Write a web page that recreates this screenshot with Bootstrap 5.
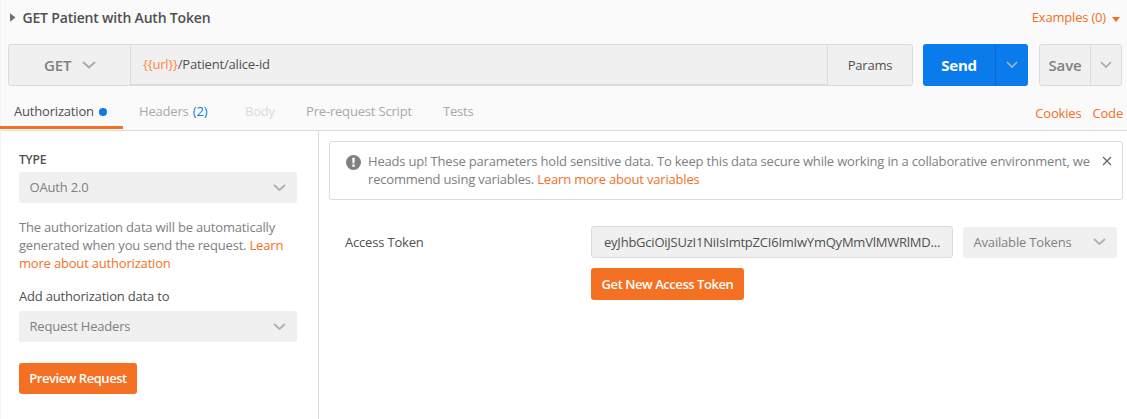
<!DOCTYPE html>
<html lang="en">
<head>
<meta charset="utf-8">
<meta name="viewport" content="width=device-width, initial-scale=1">
<title>GET Patient with Auth Token</title>
<link rel="stylesheet" href="https://cdn.jsdelivr.net/npm/bootstrap@5.3.0/dist/css/bootstrap.min.css">
<style>
  body { font: 13px/18px "Open Sans", sans-serif; letter-spacing: -.185px; color: #505050; background: #fff; height: 419px; overflow: hidden; }
  .app { height: 419px; border-left: 1px solid #f3f3f3; }
  .top { height: 131px; background: #fafafa; border-bottom: 1px solid #dbdbdb; }
  .title-row { height: 44px; padding: 0 7px 9px 8px; }
  .title { font-size: 14px; font-weight: 600; margin-left: 6.5px; }
  .orange { color: #f47023; text-decoration: none; }
  .examples { padding-bottom: 2px; }
  .request-row { height: 42px; padding: 0 4px 0 7px; }
  .box { background: #f0f0f0; border: 1px solid #dbdbdb; border-radius: 3px; }
  .url-box { width: 905px; margin-right: 10px; }
  .method { width: 122px; border-right: 1px solid #dbdbdb; font-size: 15px; font-weight: 600; color: #808080; padding-left: 35px; }
  .method svg { margin-left: 11px; }
  .url { width: 697px; border-right: 1px solid #dbdbdb; padding: 0 0 2px 12px; box-shadow: inset 0 -1px #dbdbdb; }
  .url .var { color: #ff8642; }
  .send { width: 105px; margin-right: 11px; background: #097bed; border-radius: 3px; color: #fff; font-size: 15px; font-weight: 700; letter-spacing: -.3px; }
  .send .main { width: 72px; }
  .send .drop { width: 33px; border-left: 1px solid #0a69c9; }
  .save { width: 83px; color: #808080; font-size: 15px; font-weight: 600; }
  .save .main { width: 50px; }
  .save .drop { width: 31px; border-left: 1px solid #dbdbdb; }
  .drop svg { margin: 0 1px 1px 0; }
  .tabs { height: 44px; padding-right: 4px; color: #a9a9a9; }
  .tabs .tab { height: 43px; }
  .tab-auth { width: 123px; padding-left: 14px; margin-left: -1px; border-bottom: 3px solid #f47023; color: #505050; padding-top: 10px; }
  .tab-plain { padding-top: 7px; }
  .tab-headers { width: 106px; margin-left: 16px; }
  .tab-body { width: 61px; color: #dcdcdc; }
  .tab-script { width: 137px; }
  .tab-links { padding-top: 11px; gap: 11px; }
  .dot { width: 8px; height: 8px; border-radius: 50%; background: #097bed; margin: 1px 0 0 5px; }
  .blue { color: #097bed; margin-left: 1px; }
  .side { width: 318px; padding: 20px 21px 0 18px; border-right: 1px solid #dbdbdb; }
  .label-type { font-size: 12px; font-weight: 600; height: 21px; }
  .pick { height: 31px; background: #f0f0f0; border-radius: 3px; color: #808080; padding: 0 11px; }
  .pick span { margin: 0 0 2px -.5px; }
  .pick-tokens { width: 154px; margin-left: 10px; }
  .pick-tokens span { margin-bottom: 0; }
  .muted { color: #808080; margin-top: 15px; }
  .label-add { margin: 15px 0 6px; }
  .act { background: #f47023; color: #fff; border-radius: 3px; font-size: 13px; font-weight: 600; line-height: 18px; padding: 0; border: 0; letter-spacing: -.44px; }
  .act-preview { width: 118px; height: 31px; margin-top: 21px; padding-bottom: 2px; }
  .act-token { width: 153px; height: 32px; margin: 10px 0 0 272px; }
  .notice { height: 59px; margin: 10px 4px 0 10px; border: 1px solid #dbdbdb; border-radius: 3px; color: #808080; padding: 10px 10px 0 16px; }
  .notice .warn { margin: 3px 7px 0 0; }
  .notice .close-x { margin-top: 4px; }
  .token-row { margin: 26px 10px 0 26px; }
  .token-label { width: 246px; }
  .token { width: 362px; height: 32px; padding: 0 12px; letter-spacing: -.225px; }
</style>
</head>
<body>
<div class="app d-flex flex-column">
  <header class="top flex-shrink-0">
    <div class="title-row d-flex align-items-center">
      <svg width="7" height="9" viewBox="0 0 7 9"><path d="M1 .3v8.4l5.5-4.2z" fill="#707070"/></svg>
      <span class="title">GET Patient with Auth Token</span>
      <a class="orange examples ms-auto" href="#">Examples (0)</a>
      <svg class="mt-1" style="margin-left:6px" width="8" height="5" viewBox="0 0 8 5"><path d="M0 0h8L4 5z" fill="#f47023"/></svg>
    </div>
    <div class="request-row d-flex">
      <div class="box url-box d-flex">
        <div class="method d-flex align-items-center"><span>GET</span>
          <svg width="14" height="8" viewBox="0 0 14 8" fill="none" stroke="#a9a9a9" stroke-width="2"><path d="M1 1l6 5.5L13 1"/></svg>
        </div>
        <div class="url d-flex align-items-center"><span><span class="var">{{url}}</span>/Patient/alice-id</span></div>
        <div class="flex-fill d-flex align-items-center justify-content-center"><span>Params</span></div>
      </div>
      <div class="send d-flex">
        <div class="main d-flex align-items-center justify-content-center"><span>Send</span></div>
        <div class="drop d-flex align-items-center justify-content-center">
          <svg width="12" height="8" viewBox="0 0 12 8" fill="none" stroke="#a9b2bb" stroke-width="1.7"><path d="M1 1l5 5 5-5"/></svg>
        </div>
      </div>
      <div class="box save d-flex">
        <div class="main d-flex align-items-center justify-content-center"><span>Save</span></div>
        <div class="drop d-flex align-items-center justify-content-center">
          <svg width="12" height="8" viewBox="0 0 12 8" fill="none" stroke="#a9a9a9" stroke-width="1.7"><path d="M1 1l5 5 5-5"/></svg>
        </div>
      </div>
    </div>
    <nav class="tabs d-flex">
      <div class="tab tab-auth d-flex align-items-center"><span>Authorization</span><i class="dot"></i></div>
      <div class="tab tab-plain tab-headers d-flex align-items-center"><span>Headers <span class="blue">(2)</span></span></div>
      <div class="tab tab-plain tab-body d-flex align-items-center"><span>Body</span></div>
      <div class="tab tab-plain tab-script d-flex align-items-center"><span>Pre-request Script</span></div>
      <div class="tab tab-plain d-flex align-items-center"><span>Tests</span></div>
      <div class="tab tab-links d-flex align-items-center ms-auto"><a class="orange" href="#">Cookies</a><a class="orange" href="#">Code</a></div>
    </nav>
  </header>
  <main class="d-flex flex-fill">
    <aside class="side flex-shrink-0">
      <div class="label-type">TYPE</div>
      <div class="pick d-flex align-items-center justify-content-between"><span>OAuth 2.0</span>
        <svg width="13" height="8" viewBox="0 0 13 8" fill="none" stroke="#b0b0b0" stroke-width="1.8"><path d="M1 1l5.5 5L12 1"/></svg>
      </div>
      <div class="muted text-nowrap">
        The authorization data will be automatically<br>
        generated when you send the request. <a class="orange" href="#">Learn<br>
        more about authorization</a>
      </div>
      <div class="label-add">Add authorization data to</div>
      <div class="pick d-flex align-items-center justify-content-between"><span>Request Headers</span>
        <svg width="13" height="8" viewBox="0 0 13 8" fill="none" stroke="#b0b0b0" stroke-width="1.8"><path d="M1 1l5.5 5L12 1"/></svg>
      </div>
      <button class="btn act act-preview">Preview Request</button>
    </aside>
    <section class="flex-fill">
      <div class="notice d-flex">
        <svg class="warn flex-shrink-0" width="15" height="15" viewBox="0 0 15 15"><circle cx="7.5" cy="7.5" r="7.5" fill="#808080"/><path d="M6.1 2.8h2.8l-.5 5.6H6.6zM6.3 9.6h2.4v2.2H6.3z" fill="#fff"/></svg>
        <div class="text-nowrap">
          Heads up! These parameters hold sensitive data. To keep this data secure while working in a collaborative environment, we<br>
          recommend using variables. <a class="orange" href="#">Learn more about variables</a>
        </div>
        <svg class="close-x ms-auto flex-shrink-0" width="10" height="10" viewBox="0 0 10 10" stroke="#606060" stroke-width="1.2"><path d="M1 1l8 8M9 1L1 9"/></svg>
      </div>
      <div class="token-row d-flex align-items-center">
        <div class="token-label">Access Token</div>
        <div class="box token d-flex align-items-center">eyJhbGciOiJSUzI1NiIsImtpZCI6ImIwYmQyMmVlMWRlMD...</div>
        <div class="pick pick-tokens d-flex align-items-center justify-content-between"><span>Available Tokens</span>
          <svg width="13" height="8" viewBox="0 0 13 8" fill="none" stroke="#b0b0b0" stroke-width="1.8"><path d="M1 1l5.5 5L12 1"/></svg>
        </div>
      </div>
      <button class="btn act act-token">Get New Access Token</button>
    </section>
  </main>
</div>
<script src="https://cdn.jsdelivr.net/npm/bootstrap@5.3.0/dist/js/bootstrap.bundle.min.js"></script>
</body>
</html>
